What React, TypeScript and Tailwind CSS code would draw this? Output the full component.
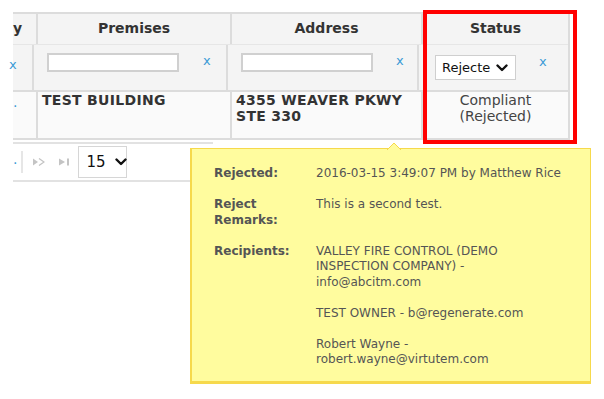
import React from "react";

const font = { fontFamily: '"DejaVu Sans", Verdana, sans-serif' };

const ClearX = ({ className = "" }: { className?: string }) => (
  <span className={`text-[13px] text-[#3b9bd6] ${className}`}>x</span>
);

const Chevron = () => (
  <svg width="12" height="8" viewBox="0 0 12 8" className="shrink-0">
    <path d="M1.5 1.5 6 6l4.5-4.5" fill="none" stroke="#111" strokeWidth="2.4" strokeLinecap="round" strokeLinejoin="round" />
  </svg>
);

const NextIcon = () => (
  <svg width="12" height="8" viewBox="0 0 12 8">
    <path d="M0 0.5 5 4 0 7.5z" fill="#c4c4c4" />
    <path d="M6 0.5 11 4 6 7.5" fill="none" stroke="#c4c4c4" strokeWidth="1.3" />
  </svg>
);

const LastIcon = () => (
  <svg width="12" height="8" viewBox="0 0 12 8">
    <path d="M1 0.5 7 4 1 7.5z" fill="#c4c4c4" />
    <rect x="9" y="0.5" width="2" height="7" fill="#c4c4c4" />
  </svg>
);

const rows: { label: React.ReactNode; value: React.ReactNode }[] = [
  { label: "Rejected:", value: "2016-03-15 3:49:07 PM by Matthew Rice" },
  {
    label: (
      <>
        Reject
        <br />
        Remarks:
      </>
    ),
    value: "This is a second test.",
  },
  {
    label: "Recipients:",
    value: (
      <>
        VALLEY FIRE CONTROL (DEMO
        <br />
        INSPECTION COMPANY) -
        <br />
        info@abcitm.com
        <br />
        <br />
        TEST OWNER - b@regenerate.com
        <br />
        <br />
        Robert Wayne -
        <br />
        robert.wayne@virtutem.com
      </>
    ),
  },
];

export default function App() {
  return (
    <div className="relative w-[604px] h-[399px] overflow-hidden bg-white text-[#333]" style={font}>
      <div className="ml-[13px] mt-[12px] w-[557px] border-t-2 border-r-2 border-[#dcdcdc]">
        {/* header row */}
        <div className="flex h-[30px] bg-[#f4f4f4] text-[14px] font-bold text-[#333]">
          <div className="w-[23px] flex items-center pb-[2px]">y</div>
          <div className="w-[194px] flex items-center justify-center pb-[2px] border-l-2 border-[#dcdcdc]">Premises</div>
          <div className="w-[191px] flex items-center justify-center pb-[2px] border-l-2 border-[#dcdcdc]">Address</div>
          <div className="flex-1 flex items-center justify-center pb-[2px] border-l-2 border-[#dcdcdc]">Status</div>
        </div>
        {/* filter row */}
        <div className="flex h-[46px] bg-[#f4f4f4] border-t border-[#e6e6e6]">
          <div className="w-[23px] pt-[7px] -ml-[4px]">
            <ClearX />
          </div>
          <div className="w-[194px] flex items-start gap-[24px] pl-[13px] pt-[8px] border-l-2 border-[#dcdcdc]">
            <div className="w-[132px] h-[19px] bg-white border-2 border-[#d0d0d0]" />
            <ClearX className="-mt-[2px]" />
          </div>
          <div className="w-[191px] flex items-start gap-[23px] pl-[13px] pt-[8px] border-l-2 border-[#dcdcdc]">
            <div className="w-[132px] h-[19px] bg-white border-2 border-[#d0d0d0]" />
            <ClearX className="-mt-[2px]" />
          </div>
          <div className="flex-1 flex items-start gap-[23px] pl-[16px] pt-[10px] border-l-2 border-[#dcdcdc]">
            <div className="w-[81px] h-[25px] bg-white border border-[#cfcfcf] flex items-center justify-between pl-[6px] pr-[7px]">
              <span className="text-[13px] text-[#111] whitespace-nowrap">Rejecte</span>
              <Chevron />
            </div>
            <ClearX className="-mt-[3px]" />
          </div>
        </div>
        {/* data row */}
        <div className="flex h-[50px] bg-[#fafafa] border-t-2 border-b-2 border-[#dcdcdc] text-[14px]">
          <div className="w-[23px] text-[#3b9bd6]">.</div>
          <div className="w-[194px] pl-[4px] font-bold leading-[16px] tracking-[0.3px] border-l-2 border-[#dcdcdc]">TEST BUILDING</div>
          <div className="w-[191px] pl-[4px] font-bold leading-[16px] tracking-[0.3px] border-l-2 border-[#dcdcdc]">
            4355 WEAVER PKWY
            <br />
            STE 330
          </div>
          <div className="flex-1 text-center leading-[16px] text-[#444] border-l-2 border-[#dcdcdc]">
            Compliant
            <br />
            (Rejected)
          </div>
        </div>
      </div>
      {/* pager */}
      <div className="ml-[13px] mt-[2px] w-[200px] h-[40px] flex items-center border-t-2 border-b-2 border-[#e2e2e2] bg-white">
        <span className="text-[14px] text-[#3b9bd6] -mt-[6px]">.</span>
        <div className="ml-[4px] w-[2px] h-[22px] bg-[#e6e6e6]" />
        <div className="ml-[10px] flex items-center gap-[13px]">
          <NextIcon />
          <LastIcon />
        </div>
        <div className="ml-[8px] w-[49px] h-[32px] border border-[#d6d6d6] flex items-center pl-[7px] gap-[9px]">
          <span className="text-[15px] text-[#111]">15</span>
          <Chevron />
        </div>
      </div>

      {/* highlight box */}
      <div className="absolute left-[423px] top-[10px] w-[154px] h-[134px] border-4 border-[#ff0000]" />

      {/* tooltip */}
      <div className="absolute left-[190px] top-[148px] w-[401px] h-[236px] bg-[#fffc9e] border-l-2 border-t border-r border-b-[3px] border-[#f6d94c] pl-[22px] pt-[17px] text-[12px] leading-[15.5px] text-[#555]">
        <svg width="14" height="8" viewBox="0 0 14 8" className="absolute -top-[7px] left-[195px]">
          <path d="M0 8 7 1 14 8" fill="#fffc9e" stroke="#f6d94c" strokeWidth="1" />
        </svg>
        {rows.map((r, i) => (
          <div key={i} className="flex mb-[15.5px]">
            <div className="w-[102px] shrink-0 font-bold">{r.label}</div>
            <div>{r.value}</div>
          </div>
        ))}
      </div>
    </div>
  );
}
